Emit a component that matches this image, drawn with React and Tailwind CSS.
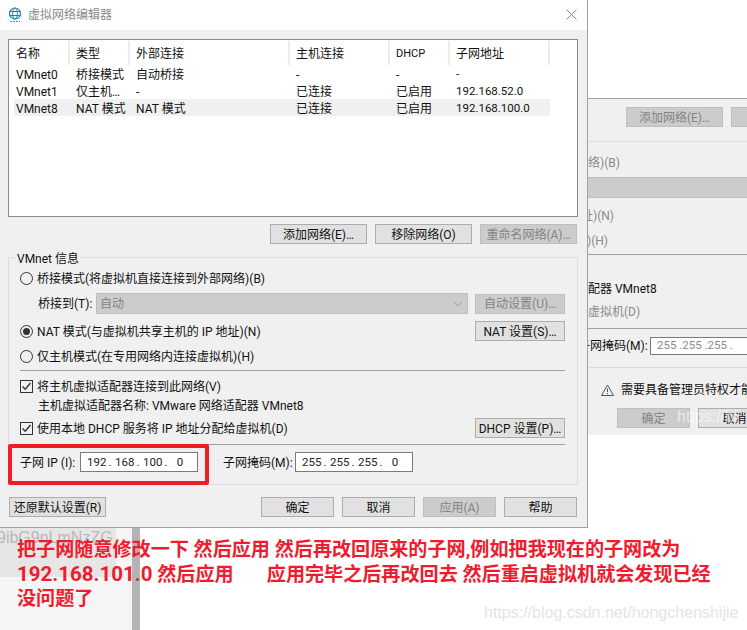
const columns = [
  { label: "名称", width: "w-[60px]" },
  { label: "类型", width: "w-[60px]" },
  { label: "外部连接", width: "w-[160px]" },
  { label: "主机连接", width: "w-[100px]" },
  { label: "DHCP", width: "w-[60px]", small: true },
  { label: "子网地址", width: "w-[100px]" },
];

const rows = [
  ["VMnet0", "桥接模式", "自动桥接", "-", "-", "-"],
  ["VMnet1", "仅主机…", "-", "已连接", "已启用", "192.168.52.0"],
  ["VMnet8", "NAT 模式", "NAT 模式", "已连接", "已启用", "192.168.100.0"],
];

const Btn = ({ children, disabled, className = "" }) => (
  <div
    className={`flex items-center justify-center h-[20px] pt-px border text-[12px] whitespace-nowrap ${
      disabled
        ? "bg-[#cccccc] border-[#bfbfbf] text-[#838383]"
        : "bg-[#e1e1e1] border-[#adadad] text-[#111111]"
    } ${className}`}
  >
    {children}
  </div>
);

const Radio = ({ checked }) => (
  <span className="flex items-center justify-center w-[13px] h-[13px] rounded-full border border-[#333333] bg-[#f0f0f0] shrink-0">
    {checked && <span className="w-[7px] h-[7px] rounded-full bg-[#333333]" />}
  </span>
);

const Check = () => (
  <span className="flex items-center justify-center w-[13px] h-[13px] border border-[#333333] bg-[#f0f0f0] shrink-0">
    <svg width="11" height="11" viewBox="0 0 11 11" fill="none">
      <path d="M1.5 5.5 L4.2 8.2 L9.5 2" stroke="#333333" strokeWidth="1.4" />
    </svg>
  </span>
);

const IpField = ({ parts, className = "" }) => (
  <div
    className={`flex items-center h-[20px] pt-px border border-[#7a7a7a] bg-white text-[11.5px] text-[#222222] ${className}`}
  >
    {parts.map((p, i) => (
      <div key={i} className="flex">
        <span className="w-[18px] text-center">{p}</span>
        {i < 3 && <span className="w-[10px] text-center">.</span>}
      </div>
    ))}
  </div>
);

const Globe = () => (
  <svg width="14" height="16" viewBox="0 0 14 16" fill="none" className="ml-[8px] shrink-0">
    <circle cx="7" cy="6.5" r="5.5" stroke="#1a87b8" strokeWidth="1.2" />
    <ellipse cx="7" cy="6.5" rx="2.4" ry="5.5" stroke="#1a87b8" strokeWidth="1" />
    <path d="M1.5 4.5 H12.5 M1.5 8.5 H12.5" stroke="#1a87b8" strokeWidth="1" />
    <path d="M2 14.5 H12" stroke="#25b89a" strokeWidth="1.2" strokeDasharray="2 1" />
  </svg>
);

const MainDialog = () => (
  <div className="absolute left-0 top-0 w-[588px] h-[528px] bg-[#f0f0f0] border-r border-b border-[#a0a0a0] text-[12px] text-[#111111]">
    <div className="flex items-center h-[30px] bg-white">
      <Globe />
      <span className="ml-[6px] text-[#8a8a8a]">虚拟网络编辑器</span>
      <svg width="11" height="11" viewBox="0 0 11 11" className="ml-auto mr-[10px] mb-[2px]">
        <path d="M0.5 0.5 L10.5 10.5 M10.5 0.5 L0.5 10.5" stroke="#8a8a8a" strokeWidth="1" />
      </svg>
    </div>

    <div className="mt-[9px] ml-[8px] w-[570px] h-[178px] bg-white border border-[#8c8c8c] pt-[1px]">
      <div className="flex h-[24px] pl-[5px]">
        {columns.map((c) => (
          <div
            key={c.label}
            className={`${c.width} relative flex items-center pl-[2px] pt-[2px] ${c.small ? "text-[11px]" : ""}`}
          >
            {c.label}
            <span className="absolute right-[4px] top-0 bottom-0 w-[2px] bg-[#ececec]" />
          </div>
        ))}
      </div>
      {rows.map((r, i) => (
        <div
          key={r[0]}
          className={`flex items-center h-[17px] pt-[2px] ml-[5px] w-[536px] ${i === 2 ? "bg-[#f0f0f0]" : ""}`}
        >
          {r.map((cell, j) => (
            <div
              key={j}
              className={`${columns[j].width} shrink-0 pl-[2px] ${j === 5 ? "text-[11.5px]" : ""}`}
            >
              {cell}
            </div>
          ))}
        </div>
      ))}
    </div>

    <div className="flex mt-[7px] ml-[270px] gap-[8px]">
      <Btn className="w-[97px]">添加网络(E)…</Btn>
      <Btn className="w-[97px]">移除网络(O)</Btn>
      <Btn disabled className="w-[97px]">重命名网络(A)…</Btn>
    </div>

    <div className="relative mt-[13px] ml-[8px] w-[570px] h-[228px] border border-[#dcdcdc] pt-[10px] pl-[11px] pr-[12px]">
      <span className="absolute left-[7px] -top-[8px] px-[1px] bg-[#f0f0f0]">VMnet 信息</span>

      <div className="flex items-center gap-[4px] h-[20px]">
        <Radio />
        <span className="pt-px">桥接模式(将虚拟机直接连接到外部网络)(B)</span>
      </div>

      <div className="flex items-center mt-[5px] h-[21px] pl-[18px]">
        <span className="w-[58px] pt-px">桥接到(T):</span>
        <div className="flex items-center justify-between w-[373px] h-[21px] bg-[#cccccc] border border-[#bfbfbf] px-[3px] text-[#838383]">
          <span className="pt-px">自动</span>
          <svg width="10" height="6" viewBox="0 0 10 6" fill="none" className="mr-[1px]">
            <path d="M1 1 L5 5 L9 1" stroke="#a0a0a0" strokeWidth="1" />
          </svg>
        </div>
        <Btn disabled className="w-[90px] ml-[7px]">自动设置(U)…</Btn>
      </div>

      <div className="flex items-center justify-between mt-[7px] h-[20px]">
        <div className="flex items-center gap-[4px]">
          <Radio checked />
          <span className="pt-px">NAT 模式(与虚拟机共享主机的 IP 地址)(N)</span>
        </div>
        <Btn className="w-[90px]">NAT 设置(S)…</Btn>
      </div>

      <div className="flex items-center gap-[4px] mt-[5px] h-[20px]">
        <Radio />
        <span className="pt-px">仅主机模式(在专用网络内连接虚拟机)(H)</span>
      </div>

      <div className="mt-[4px] h-px bg-[#a0a0a0]" />

      <div className="flex items-center gap-[4px] mt-[5px] h-[20px]">
        <Check />
        <span className="pt-px">将主机虚拟适配器连接到此网络(V)</span>
      </div>

      <div className="flex items-center h-[18px] pt-px pl-[18px]">主机虚拟适配器名称: VMware 网络适配器 VMnet8</div>

      <div className="flex items-center justify-between mt-[4px] h-[20px]">
        <div className="flex items-center gap-[4px]">
          <Check />
          <span className="pt-px">使用本地 DHCP 服务将 IP 地址分配给虚拟机(D)</span>
        </div>
        <Btn className="w-[90px]">DHCP 设置(P)…</Btn>
      </div>

      <div className="mt-[6px] h-px bg-[#a0a0a0]" />

      <div className="flex items-center mt-[7px] h-[20px]">
        <span className="w-[60px] pt-[2px]">子网 IP (I):</span>
        <IpField parts={["192", "168", "100", "0"]} className="w-[118px] pl-[6px]" />
        <span className="ml-[25px] w-[72px] pt-[2px]">子网掩码(M):</span>
        <IpField parts={["255", "255", "255", "0"]} className="w-[118px] pl-[6px]" />
      </div>

      <div className="absolute -left-px top-[186px] w-[201px] h-[41px] border-[4px] border-[#ee1c25] rounded-[2px]" />
    </div>

    <div className="flex mt-[12px] ml-[9px]">
      <Btn className="w-[97px]">还原默认设置(R)</Btn>
      <div className="flex gap-[8px] ml-[155px]">
        <Btn className="w-[73px]">确定</Btn>
        <Btn className="w-[73px]">取消</Btn>
        <Btn disabled className="w-[73px]">应用(A)</Btn>
        <Btn className="w-[73px]">帮助</Btn>
      </div>
    </div>
  </div>
);

// the second, washed out window peeking out behind the main one
const BackDialog = () => (
  <div className="absolute left-[588px] top-[98px] w-[159px] h-[337px] bg-[#f0f0f0] overflow-hidden text-[12px] text-[#8a8a8a]">
    <div className="h-px bg-[#a0a0a0]" />
    <div className="flex mt-[8px] ml-[38px] gap-[8px]">
      <Btn disabled className="w-[97px] shrink-0">添加网络(E)…</Btn>
      <Btn disabled className="w-[97px] shrink-0" />
    </div>
    <div className="mt-[14px] h-px bg-[#dcdcdc]" />
    <div className="flex items-center h-[20px] pt-px mt-[10px]">络)(B)</div>
    <div className="mt-[5px] h-[21px] bg-[#cccccc] border-y border-[#bfbfbf]" />
    <div className="flex items-center h-[20px] pt-px mt-[7px] -ml-[7px]">址)(N)</div>
    <div className="flex items-center h-[20px] pt-px mt-[5px] -ml-[1px]">)(H)</div>
    <div className="mt-[4px] h-px bg-[#a0a0a0]" />
    <div className="flex items-center h-[18px] mt-[25px] text-[#111111] whitespace-nowrap">配器 VMnet8</div>
    <div className="flex items-center h-[18px] mt-[5px]">虚拟机(D)</div>
    <div className="mt-[7px] h-px bg-[#a0a0a0]" />
    <div className="flex items-center mt-[8px] h-[18px] text-[#111111] whitespace-nowrap">
      <span className="-ml-[10px] w-[73px] shrink-0">子网掩码(M):</span>
      <div className="flex items-center h-[18px] w-[100px] shrink-0 ml-[-1px] border border-[#7a7a7a] bg-white pl-[6px] text-[11.5px] text-[#8a8a8a] whitespace-pre">255 .255 .255 .</div>
    </div>
    <div className="mt-[12px] h-px bg-[#dcdcdc]" />
    <div className="flex items-center mt-[14px] ml-[13px] h-[16px] gap-[7px] text-[#111111] whitespace-nowrap">
      <svg width="13" height="12" viewBox="0 0 13 12" fill="none" className="shrink-0">
        <path d="M6.5 1 L12.5 11.5 H0.5 Z" stroke="#4a5a68" strokeWidth="1" />
        <path d="M6.5 4.5 V8 M6.5 9 V10.2" stroke="#4a5a68" strokeWidth="1" />
      </svg>
      <span>需要具备管理员特权才能</span>
    </div>
    <div className="flex mt-[10px] ml-[29px] gap-[8px]">
      <Btn disabled className="w-[73px] shrink-0">确定</Btn>
      <Btn className="w-[73px] shrink-0">取消</Btn>
    </div>
    <span className="absolute left-[89px] top-[307px] font-['Liberation_Sans',sans-serif] text-[16px] text-white/60 whitespace-nowrap">https://bl</span>
  </div>
);

const App = () => (
  <div className="relative w-[747px] h-[630px] overflow-hidden bg-white font-['Roboto','Noto_Sans_CJK_SC',sans-serif]">
    <BackDialog />

    <div className="absolute left-0 top-[528px] w-[132px] h-[102px] bg-[#f5f5f5]">
      <div className="w-[116px] h-[49px] bg-[#e6e6e6] overflow-hidden font-['Liberation_Sans',sans-serif] text-[16px] leading-[20px] text-[#b8b8b8] whitespace-nowrap -indent-[3px]">
        9ibG9nLmNzZG
      </div>
    </div>
    <div className="absolute left-[132px] top-[528px] w-[8px] h-[102px] bg-[#b4b4b4]" />

    <MainDialog />

    <div className="absolute left-[17px] top-[538px] w-[725px] text-[19.1px] leading-[24px] font-bold text-[#ee1c2e]">
      <p className="whitespace-pre">把子网随意修改一下 然后应用 然后再改回原来的子网,例如把我现在的子网改为</p>
      <p className="whitespace-pre">
        <span className="text-[20.5px]">192.168.101.0</span> 然后应用{"       "}应用完毕之后再改回去 然后重启虚拟机就会发现已经
      </p>
      <p>没问题了</p>
    </div>

    <span className="absolute left-[484px] top-[601px] font-['Liberation_Sans',sans-serif] text-[16px] text-[#e4e4e4] whitespace-nowrap">
      https://blog.csdn.net/hongchenshijie
    </span>
  </div>
);

export default App;
